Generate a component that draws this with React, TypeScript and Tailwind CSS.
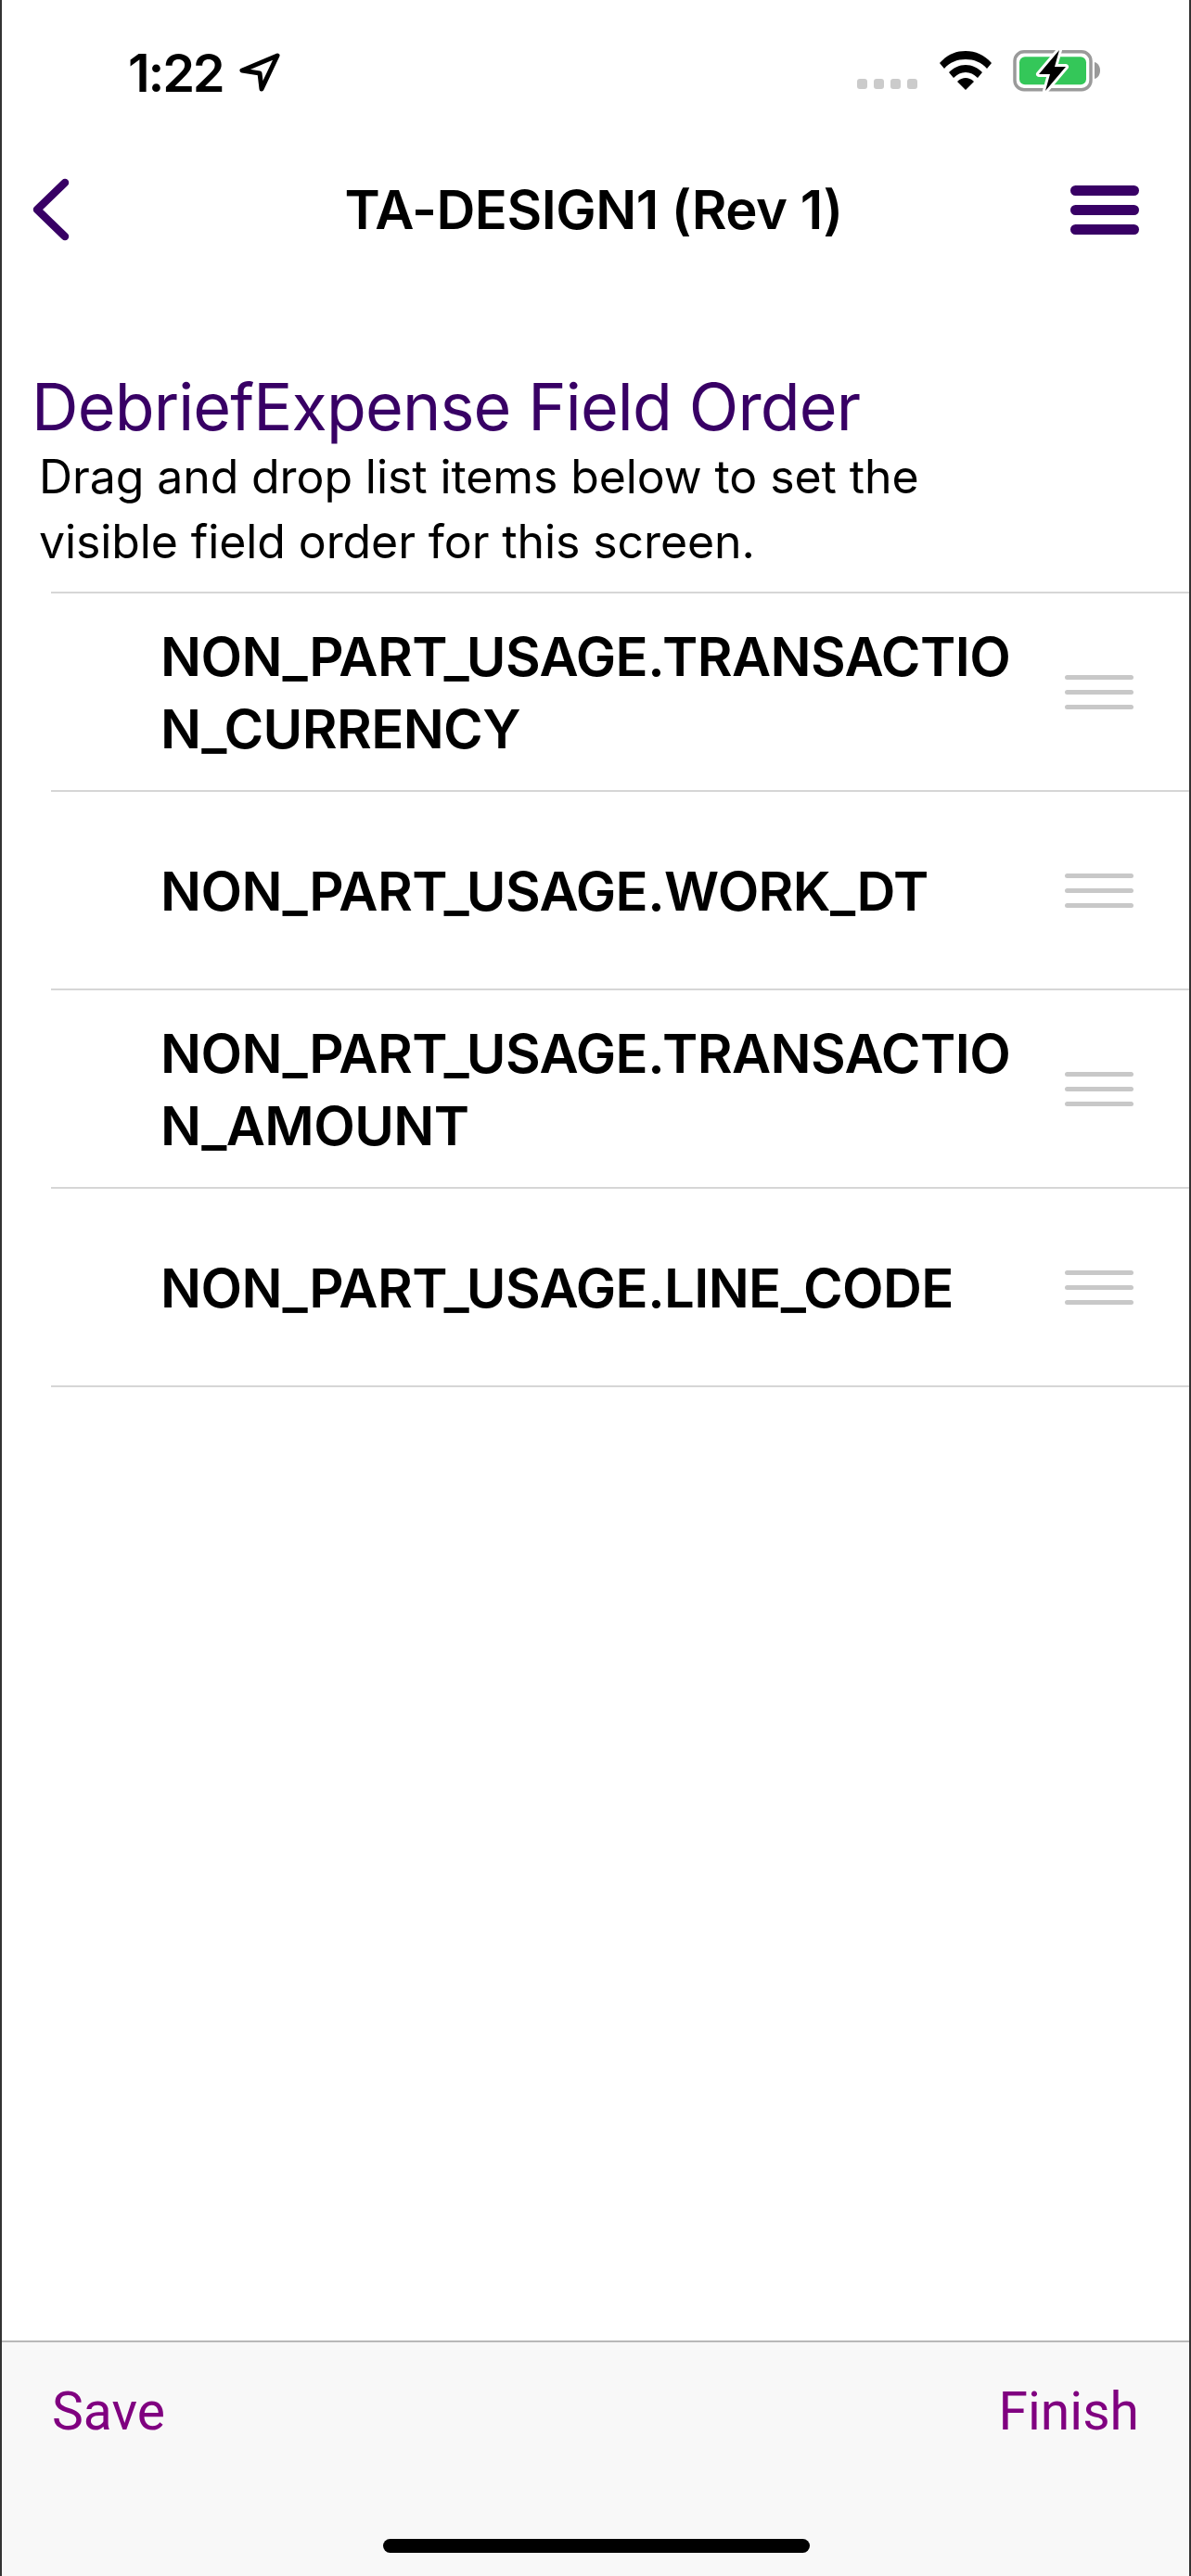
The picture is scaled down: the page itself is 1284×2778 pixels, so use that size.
const FONT = "font-['Inter','Liberation_Sans',sans-serif]"

const FIELDS = [
  ['NON_PART_USAGE.TRANSACTIO', 'N_CURRENCY'],
  ['NON_PART_USAGE.WORK_DT'],
  ['NON_PART_USAGE.TRANSACTIO', 'N_AMOUNT'],
  ['NON_PART_USAGE.LINE_CODE'],
]

function StatusBar() {
  return (
    <div className="flex h-[164px] shrink-0 items-start justify-between pt-[57px] pr-[95px] pl-[136px]">
      <div className="flex items-center gap-[16px]">
        <span className="text-[56px] leading-[40px] font-semibold tracking-[-2.2px] text-black">1:22</span>
        <svg width="46" height="44" viewBox="0 0 46 44" fill="none" className="mt-[-1px]">
          <path d="M42 4 L4 20 L23 23 L25 40 Z" stroke="#000" strokeWidth="5" strokeLinejoin="round" />
        </svg>
      </div>
      <div className="flex items-start">
        {/* cell dots */}
        <div className="mt-[28px] mr-[23px] flex gap-[7px]">
          <span className="h-[11px] w-[11px] rounded-[3px] bg-[#cbcbcb]" />
          <span className="h-[11px] w-[11px] rounded-[3px] bg-[#cbcbcb]" />
          <span className="h-[11px] w-[11px] rounded-[3px] bg-[#cbcbcb]" />
          <span className="h-[11px] w-[11px] rounded-[3px] bg-[#cbcbcb]" />
        </div>
        <svg width="58" height="44" viewBox="0 0 58 44" className="mt-[-4px] mr-[22px]">
          <path d="M29 2 C18 2 9 6 1 15 L6 21 C12 14 20 11 29 11 C38 11 46 14 52 21 L57 15 C49 6 40 2 29 2 Z" fill="#000" />
          <path d="M29 17 C22 17 16 20 11 25 L16 31 C20 27 24 25 29 25 C34 25 38 27 42 31 L47 25 C42 20 36 17 29 17 Z" fill="#000" />
          <path d="M29 31 C26 31 23 32 20 35 L29 44 L38 35 C35 32 32 31 29 31 Z" fill="#000" />
        </svg>
        <svg width="95" height="48" viewBox="0 0 95 48" className="mt-[-4px]">
          <rect x="2" y="2.75" width="82" height="41" rx="10" fill="none" stroke="#9a9a9a" strokeWidth="3.5" />
          <rect x="7" y="8.25" width="72" height="30" rx="6" fill="#34c759" />
          <path d="M88 14 C92 15 94 19 94 23 C94 27 92 31 88 32 Z" fill="#9a9a9a" />
          <path d="M50 1 L28 27 L40 27 L35 45 L57 19 L45 19 Z" fill="#000" stroke="#fff" strokeWidth="6" strokeLinejoin="round" paintOrder="stroke" />
        </svg>
      </div>
    </div>
  )
}

function Header() {
  return (
    <div className="flex h-[124px] shrink-0 items-center pr-[54px] pl-[32px]">
      <div className="flex-1">
        <svg width="42" height="68" viewBox="0 0 42 68" fill="none">
          <path d="M36 5 L6 34 L36 63" stroke="#380065" strokeWidth="8.5" strokeLinecap="round" strokeLinejoin="round" />
        </svg>
      </div>
      <span className="ml-[18px] text-[58px] leading-[70px] font-semibold tracking-[-0.5px] text-black">
        TA-DESIGN1 (Rev 1)
      </span>
      <div className="flex flex-1 justify-end">
        <div className="flex w-[74px] flex-col gap-[10px]">
          <span className="h-[11px] rounded-full bg-[#380065]" />
          <span className="h-[11px] rounded-full bg-[#380065]" />
          <span className="h-[11px] rounded-full bg-[#380065]" />
        </div>
      </div>
    </div>
  )
}

function FieldRow({ lines }: { lines: string[] }) {
  return (
    <div className="flex h-[214px] items-center justify-between border-t-2 border-[#d6d6d6] pr-[60px] pl-[118px]">
      <div className="pt-[2px] text-[58px] leading-[78px] font-semibold tracking-[-0.6px] whitespace-nowrap text-black">
        {lines.map((line) => (
          <div key={line}>{line}</div>
        ))}
      </div>
      <div className="flex w-[74px] flex-col gap-[11px]">
        <span className="h-[5px] rounded-full bg-[#c8c8c8]" />
        <span className="h-[5px] rounded-full bg-[#c8c8c8]" />
        <span className="h-[5px] rounded-full bg-[#c8c8c8]" />
      </div>
    </div>
  )
}

export default function App() {
  return (
    <div className={`flex h-[2778px] w-[1284px] flex-col overflow-hidden border-x-2 border-[#333] bg-white ${FONT}`}>
      <StatusBar />
      <Header />

      <div className="flex-1">
        <h1 className="mt-[111px] pl-[32px] text-[70px] leading-[80px] font-normal tracking-[-0.85px] text-[#380065]">
          DebriefExpense Field Order
        </h1>
        <p className="pl-[40px] text-[50px] leading-[70px] font-normal tracking-[-0.1px] text-black">
          Drag and drop list items below to set the
          <br />
          visible field order for this screen.
        </p>
        <div className="mt-[19px] ml-[53px] border-b-2 border-[#d6d6d6]">
          {FIELDS.map((lines) => (
            <FieldRow key={lines.join('')} lines={lines} />
          ))}
        </div>
      </div>

      {/* bottom toolbar */}
      <div className="relative h-[254px] shrink-0 border-t-2 border-[#b8b8b8] bg-[#f8f8f8]">
        <div className="flex justify-between pt-[40px] pr-[54px] pl-[54px] font-['Roboto',sans-serif] text-[57px] leading-[70px] text-[#800080]">
          <span>Save</span>
          <span>Finish</span>
        </div>
        <div className="absolute top-[212px] left-[411px] h-[15px] w-[460px] rounded-full bg-black" />
      </div>
    </div>
  )
}
